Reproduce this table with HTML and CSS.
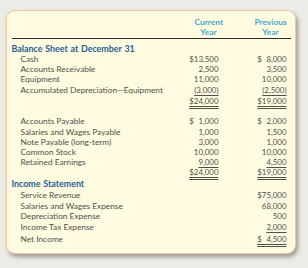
FILE: index.html
```html
<!DOCTYPE html>
<html>
<head>
<meta charset="utf-8">
<link rel="stylesheet" href="styles.css">
</head>
<body>
<div class="card">
  <div class="row head">
    <span class="label"></span>
    <span class="col hd hd1">Current<br>Year</span>
    <span class="gap"></span>
    <span class="col hd hd2">Previous<br>Year</span>
  </div>

  <div class="block b1">
    <div class="row"><span class="label title">Balance Sheet at December 31</span></div>
    <div class="row"><span class="label in">Cash</span><span class="col num">$13,500</span><span class="gap"></span><span class="col num">$&#8199;8,000</span></div>
    <div class="row"><span class="label in">Accounts Receivable</span><span class="col num">2,500</span><span class="gap"></span><span class="col num">3,500</span></div>
    <div class="row"><span class="label in">Equipment</span><span class="col num">11,000</span><span class="gap"></span><span class="col num">10,000</span></div>
    <div class="row"><span class="label in">Accumulated Depreciation—Equipment</span><span class="col num"><span class="u1">(3,000)</span></span><span class="gap"></span><span class="col num"><span class="u1">(2,500)</span></span></div>
    <div class="row total"><span class="label in"></span><span class="col num"><span class="u2">$24,000</span></span><span class="gap"></span><span class="col num"><span class="u2">$19,000</span></span></div>
  </div>

  <div class="block b2">
    <div class="row"><span class="label in">Accounts Payable</span><span class="col num">$&#8199;1,000</span><span class="gap"></span><span class="col num">$&#8199;2,000</span></div>
    <div class="row"><span class="label in">Salaries and Wages Payable</span><span class="col num">1,000</span><span class="gap"></span><span class="col num">1,500</span></div>
    <div class="row"><span class="label in">Note Payable (long-term)</span><span class="col num">3,000</span><span class="gap"></span><span class="col num">1,000</span></div>
    <div class="row"><span class="label in">Common Stock</span><span class="col num">10,000</span><span class="gap"></span><span class="col num">10,000</span></div>
    <div class="row"><span class="label in">Retained Earnings</span><span class="col num"><span class="u1">9,000</span></span><span class="gap"></span><span class="col num"><span class="u1">4,500</span></span></div>
    <div class="row"><span class="label in"></span><span class="col num"><span class="u2">$24,000</span></span><span class="gap"></span><span class="col num"><span class="u2">$19,000</span></span></div>
  </div>

  <div class="block b3">
    <div class="row"><span class="label title">Income Statement</span></div>
    <div class="row"><span class="label in">Service Revenue</span><span class="col num">$75,000</span></div>
    <div class="row"><span class="label in">Salaries and Wages Expense</span><span class="col num">68,000</span></div>
    <div class="row"><span class="label in">Depreciation Expense</span><span class="col num">500</span></div>
    <div class="row"><span class="label in">Income Tax Expense</span><span class="col num"><span class="u1">2,000</span></span></div>
    <div class="row last"><span class="label in">Net Income</span><span class="col num"><span class="u2">$&#8199;4,500</span></span></div>
  </div>
</div>
</body>
</html>
```

FILE: styles.css
```css
html, body {
  margin: 0;
  padding: 0;
}
body {
  background: #ecebe5;
  width: 308px;
  height: 268px;
  overflow: hidden;
  font-family: Lato, "Open Sans", sans-serif;
  font-size: 8.3px;
  color: #4f4f4c;
}
.card {
  margin: 10px 0 0 6px;
  width: 290px;
  height: 244px;
  box-sizing: border-box;
  background: #fffbe1;
  border: 1.5px solid #f1c8a6;
  border-radius: 9px;
  box-shadow: 2px 3px 4px rgba(60, 55, 45, 0.45);
  padding: 5.5px 4.5px 0 4.5px;
}
.row {
  display: flex;
  align-items: center;
  height: 10.3px;
  line-height: 10.3px;
  white-space: pre;
}
.label {
  flex: 1;
}
.label.in {
  padding-left: 9px;
}
.title {
  font-weight: bold;
  color: #235f93;
  font-size: 8.9px;
  word-spacing: 0.6px;
}
.col {
  width: 40px;
  box-sizing: border-box;
  text-align: right;
  padding-right: 4px;
}
.num {
  font-size: 7.9px;
}
.gap {
  width: 28px;
}
.head {
  height: 21px;
  line-height: 10.5px;
  border-bottom: 1px solid #2e2e2e;
  align-items: flex-end;
}
.hd {
  text-align: center;
  font-weight: bold;
  font-size: 8.4px;
  color: #44a9cf;
  padding-right: 0;
}
.hd1 {
  padding-left: 12px;
  width: 40px;
}
.hd2 {
  padding-left: 0;
}
.b1 {
  margin-top: 5px;
}
.b1 .row.total {
  margin-top: 1.2px;
}
.b2 {
  margin-top: 10px;
}
.b2 .row {
  height: 10.1px;
  line-height: 10.1px;
}
.b3 {
  margin-top: 2.4px;
}
.b3 .row {
  height: 10.7px;
  line-height: 10.7px;
}
.b3 .row.last {
  margin-top: 1.3px;
}
.u1 {
  text-decoration: underline;
  text-decoration-thickness: 1px;
  text-underline-offset: 1.5px;
}
.u2 {
  text-decoration: underline double;
  text-decoration-thickness: 1px;
  text-underline-offset: 1.5px;
}
```
